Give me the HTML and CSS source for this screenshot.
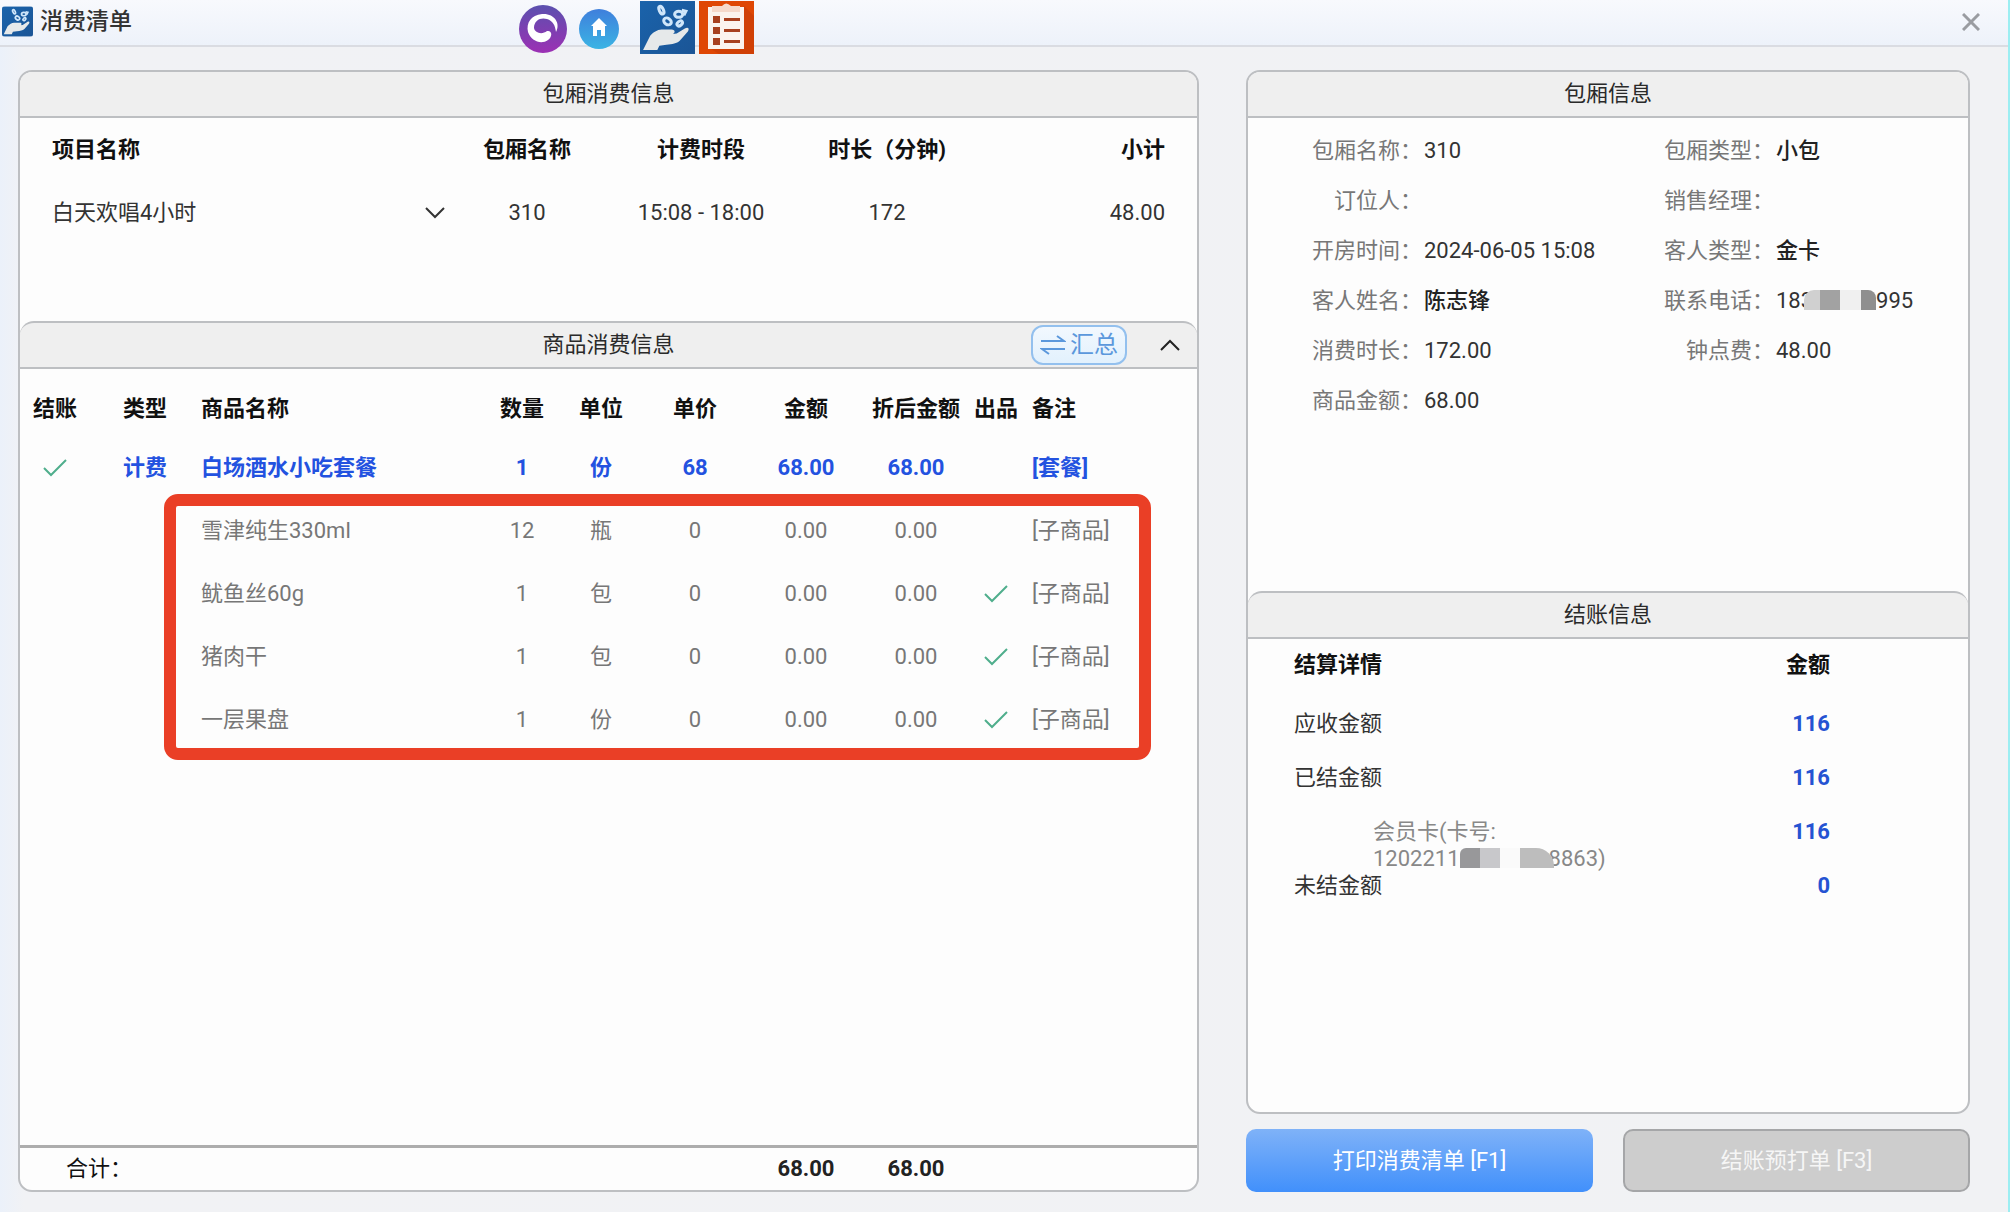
FILE: index.html
```html
<!DOCTYPE html>
<html lang="zh-CN">
<head>
<meta charset="utf-8">
<title>消费清单</title>
<link rel="stylesheet" href="styles.css">
</head>
<body>
<svg class="defs" aria-hidden="true">
  <defs>
    <linearGradient id="tile-blue" x1="0" y1="0" x2="1" y2="1"><stop offset="0" stop-color="#1a63ab"/><stop offset="1" stop-color="#1b5596"/></linearGradient>
    <linearGradient id="purple" x1="0" y1="0" x2="0" y2="1"><stop offset="0" stop-color="#5b50ae"/><stop offset="1" stop-color="#9c30b4"/></linearGradient>
    <linearGradient id="sky" x1="0" y1="0" x2="0" y2="1"><stop offset="0" stop-color="#3f7fdc"/><stop offset="1" stop-color="#3bb4e4"/></linearGradient>
    <symbol id="hand" viewBox="0 0 54 52">
      <rect width="54" height="52" fill="url(#tile-blue)"/>
      <path d="M3 48 10 34C13 31 17 28 21 28H31C35 28 35 32 31 33H26L36 32 44 27C47 25 49 27 47 30L39 39C36 42 32 42 26 43L19 44 17 48Z" fill="#e6e9ea"/>
      <g fill="none" stroke="#cfe6fa" stroke-width="3"><ellipse cx="21" cy="9" rx="2" ry="4" transform="rotate(-25 21 9)"/><ellipse cx="27" cy="20" rx="4" ry="3" transform="rotate(35 27 20)"/><ellipse cx="38" cy="13" rx="4" ry="3"/><ellipse cx="39" cy="22" rx="3" ry="2" transform="rotate(-40 39 22)"/><path d="M41 9l4 1-2 4"/></g>
    </symbol>
    <symbol id="check" viewBox="0 0 24 18"><path d="M1 9 8 16 23 1" fill="none" stroke="#4fae8c" stroke-width="2"/></symbol>
  </defs>
</svg>

<header class="titlebar">
  <svg class="app-icon" aria-hidden="true"><use href="#hand"/></svg>
  <h1>消费清单</h1>
  <nav class="dock" aria-label="快捷入口">
    <a href="#swirl" aria-label="系统"><svg width="52" height="50" viewBox="0 0 52 50"><circle cx="26" cy="26" r="24" fill="url(#purple)"/><path d="M25 11C14 12 9 20 11 29C14 38 24 42 31 37C36 33 35 27 30 28C25 32 18 30 17 25C17 17 24 14 30 16C36 18 38 22 39 29C44 20 37 10 25 11Z" fill="#fff"/></svg></a>
    <a href="#home" aria-label="主页" class="home"><svg width="42" height="42" viewBox="0 0 42 42"><circle cx="21" cy="21" r="20" fill="url(#sky)"/><path d="M21 10 29 18H27V28H23V22H19V28H15V18H13Z" fill="#fff"/></svg></a>
    <a href="#bill" aria-label="消费"><svg width="55" height="53"><use href="#hand"/></svg></a>
    <a href="#list" aria-label="清单"><svg width="55" height="53" viewBox="0 0 55 53"><rect width="55" height="53" fill="#df4705"/><path d="M45 5 55 15V53H20L9 46Z" fill="#d04006"/><rect x="9" y="6" width="36" height="42" fill="#fbf3ee"/><path d="M13 5H23Q27 0 32 5H41V11H13Z" fill="#f5d9cb"/><g fill="#a8401f"><rect x="14" y="15" width="7" height="7"/><rect x="14" y="26" width="7" height="7"/><rect x="14" y="37" width="7" height="7"/><rect x="25" y="17" width="16" height="3"/><rect x="25" y="28" width="16" height="3"/><rect x="25" y="39" width="16" height="3"/></g></svg></a>
  </nav>
  <button class="close" type="button" aria-label="关闭"><svg width="18" height="18" viewBox="0 0 18 18"><path d="M1 1 17 17M17 1 1 17" stroke="#9a9ca1" stroke-width="3"/></svg></button>
</header>

<main class="content">
  <section class="panel">
    <div class="panel-head"><h2>包厢消费信息</h2></div>
    <div class="room-body">
      <table class="room-table">
        <colgroup><col><col class="w-room"><col class="w-period"><col class="w-length"><col class="w-sub"></colgroup>
        <thead><tr><th class="first">项目名称</th><th>包厢名称</th><th>计费时段</th><th>时长（分钟)</th><th class="last">小计</th></tr></thead>
        <tbody><tr>
          <td class="first"><div class="item"><span>白天欢唱4小时</span><button class="icon-btn" type="button" aria-label="展开"><svg width="22" height="14" viewBox="0 0 22 14"><path d="M2 2 11 11 20 2" fill="none" stroke="#333" stroke-width="2"/></svg></button></div></td>
          <td>310</td><td>15:08 - 18:00</td><td>172</td><td class="last">48.00</td>
        </tr></tbody>
      </table>
    </div>

    <div class="panel-head stacked">
      <h2>商品消费信息</h2>
      <div class="head-tools">
        <button class="summary" type="button"><svg width="26" height="20" viewBox="0 0 26 20" aria-hidden="true"><path d="M1 6H24L17 1M25 14H2L9 19" fill="none" stroke="#5b98dc" stroke-width="2"/></svg>汇总</button>
        <button class="icon-btn" type="button" aria-label="收起"><svg width="22" height="14" viewBox="0 0 22 14"><path d="M2 12 11 3 20 12" fill="none" stroke="#222" stroke-width="2"/></svg></button>
      </div>
    </div>
    <div class="goods-body">
      <table class="goods">
        <colgroup><col class="c-paid"><col class="c-type"><col><col class="c-qty"><col class="c-unit"><col class="c-price"><col class="c-sum"><col class="c-net"><col class="c-out"><col class="c-note"></colgroup>
        <thead><tr><th>结账</th><th>类型</th><th class="left">商品名称</th><th>数量</th><th>单位</th><th>单价</th><th>金额</th><th>折后金额</th><th>出品</th><th class="note">备注</th></tr></thead>
        <tbody>
          <tr class="combo"><td><svg class="check"><use href="#check"/></svg></td><td>计费</td><td class="left">白场酒水小吃套餐</td><td>1</td><td>份</td><td>68</td><td>68.00</td><td>68.00</td><td></td><td class="note">[套餐]</td></tr>
          <tr><td></td><td></td><td class="left">雪津纯生330ml</td><td>12</td><td>瓶</td><td>0</td><td>0.00</td><td>0.00</td><td></td><td class="note">[子商品]</td></tr>
          <tr><td></td><td></td><td class="left">鱿鱼丝60g</td><td>1</td><td>包</td><td>0</td><td>0.00</td><td>0.00</td><td><svg class="check"><use href="#check"/></svg></td><td class="note">[子商品]</td></tr>
          <tr><td></td><td></td><td class="left">猪肉干</td><td>1</td><td>包</td><td>0</td><td>0.00</td><td>0.00</td><td><svg class="check"><use href="#check"/></svg></td><td class="note">[子商品]</td></tr>
          <tr><td></td><td></td><td class="left">一层果盘</td><td>1</td><td>份</td><td>0</td><td>0.00</td><td>0.00</td><td><svg class="check"><use href="#check"/></svg></td><td class="note">[子商品]</td></tr>
        </tbody>
      </table>
      <div class="highlight"></div>
    </div>
    <table class="totals">
      <colgroup><col><col class="c-sum"><col class="c-net"><col class="c-out"><col class="c-note"></colgroup>
      <tbody><tr><th scope="row">合计：</th><td>68.00</td><td>68.00</td><td></td><td></td></tr></tbody>
    </table>
  </section>

  <div class="side">
    <section class="panel">
      <div class="panel-head"><h2>包厢信息</h2></div>
      <dl class="info">
        <dt>包厢名称：</dt><dd>310</dd><dt>包厢类型：</dt><dd class="strong">小包</dd>
        <dt>订位人：</dt><dd></dd><dt>销售经理：</dt><dd></dd>
        <dt>开房时间：</dt><dd>2024-06-05 15:08</dd><dt>客人类型：</dt><dd class="strong">金卡</dd>
        <dt>客人姓名：</dt><dd class="strong">陈志锋</dd><dt>联系电话：</dt><dd>183<span class="mask phone"></span>995</dd>
        <dt>消费时长：</dt><dd>172.00</dd><dt>钟点费：</dt><dd>48.00</dd>
        <dt>商品金额：</dt><dd>68.00</dd>
      </dl>
      <div class="panel-head stacked"><h2>结账信息</h2></div>
      <div class="bill-body">
        <table class="bill">
          <thead><tr><th>结算详情</th><th class="amount">金额</th></tr></thead>
          <tbody>
            <tr><td>应收金额</td><td class="amount">116</td></tr>
            <tr><td>已结金额</td><td class="amount">116</td></tr>
            <tr><td class="card">会员卡(卡号:<br>1202211<span class="mask cardno"></span>8863)</td><td class="amount">116</td></tr>
            <tr class="due"><td>未结金额</td><td class="amount">0</td></tr>
          </tbody>
        </table>
      </div>
    </section>
    <div class="actions">
      <button class="primary" type="button">打印消费清单 [F1]</button>
      <button class="muted" type="button" disabled>结账预打单 [F3]</button>
    </div>
  </div>
</main>
</body>
</html>
```

FILE: styles.css
```css
* { box-sizing: border-box; }

body {
  margin: 0;
  min-height: 100vh;
  display: flex;
  flex-direction: column;
  background: linear-gradient(90deg, #ebf1fa 0, #f1f2f5 24px, #f1f2f4 100%);
  border-right: 2px solid #9ceef2;
  font: 22px/28px Roboto, "Noto Sans CJK SC", sans-serif;
  color: #333;
}

h1, h2, dl, dd { margin: 0; font-weight: 400; }
button { font: inherit; border: 0; padding: 0; background: none; color: inherit; }
svg { display: block; }
table { width: 100%; table-layout: fixed; border-collapse: collapse; }
th, td { padding: 0; text-align: center; }
th { font-weight: 700; color: #111; }

.defs { position: absolute; width: 0; height: 0; }

/* Title bar */
.titlebar {
  position: relative;
  display: flex;
  align-items: center;
  gap: 7px;
  height: 47px;
  padding: 0 18px 2px 2px;
  border-bottom: 2px solid #dadce2;
  background: linear-gradient(#f8f9fd, #edf2fa);
}
.app-icon { width: 31px; height: 31px; border-radius: 3px; }
h1 { flex: 1; font-size: 23px; font-weight: 500; color: #333; }
.dock {
  position: absolute;
  left: 517px;
  top: 1px;
  display: flex;
  align-items: center;
  gap: 4px;
}
.home { margin: 3px 16px 0 5px; }
.close { padding: 10px; }

/* Panels */
.content {
  flex: 1;
  display: grid;
  grid-template-columns: minmax(0, 1181fr) minmax(0, 724fr);
  gap: 47px;
  padding: 23px 38px 20px 18px;
}
.panel {
  flex: 1;
  display: flex;
  flex-direction: column;
  border: 2px solid #bdbfc2;
  border-radius: 14px;
  background: #fdfdfd;
  overflow: hidden;
}
.panel-head {
  display: grid;
  grid-template-columns: 1fr auto 1fr;
  align-items: center;
  height: 46px;
  border-bottom: 2px solid #bdbfc2;
  background: #efefef;
}
.panel-head h2 { grid-column: 2; font-size: 22px; color: #2a2a2a; }
.stacked {
  height: 48px;
  border-top: 2px solid #bdbfc2;
  border-radius: 14px 14px 0 0;
}
.head-tools {
  display: flex;
  justify-content: flex-end;
  align-items: center;
  gap: 32px;
  padding-right: 16px;
}
.summary {
  display: flex;
  align-items: center;
  gap: 4px;
  height: 40px;
  padding: 0 7px;
  border: 2px solid #93c0ee;
  border-radius: 12px;
  background: linear-gradient(#f2f8fe, #e2f1fd);
  color: #5b98dc;
  font-size: 24px;
}

/* Room charges */
.room-body { height: 203px; }
.room-table tr { height: 63px; }
.w-room { width: 152px; }
.w-period { width: 196px; }
.w-length { width: 176px; }
.w-sub { width: 222px; }
.room-table .first { padding-left: 32px; text-align: left; }
.room-table .last { padding-right: 32px; text-align: right; }
.item { display: flex; justify-content: space-between; align-items: center; padding-right: 5px; }

/* Goods */
.goods-body { position: relative; flex: 1; }
.goods tr { height: 63px; }
.goods thead tr { height: 67px; }
.goods thead th { padding-top: 12px; }
.c-paid { width: 70px; }
.c-type { width: 110px; }
.c-qty { width: 86px; }
.c-unit { width: 72px; }
.c-price { width: 116px; }
.c-sum { width: 106px; }
.c-net { width: 114px; }
.c-out { width: 46px; }
.c-note { width: 178px; }
.goods td { color: #777; }
.goods .combo td { color: #2352e0; font-weight: 700; }
.goods .left { padding-left: 1px; text-align: left; }
.goods .note { padding-left: 13px; text-align: left; }
.check { width: 24px; height: 18px; margin: 0 auto; }
.highlight {
  position: absolute;
  top: 125px;
  left: 144px;
  right: 46px;
  height: 266px;
  border: 12px solid #ea3f26;
  border-radius: 14px;
}
.totals { border-top: 3px solid #adadad; }
.totals tr { height: 44px; }
.totals th { padding-left: 46px; text-align: left; font-weight: 400; }
.totals td { font-weight: 700; color: #222; }

/* Room details */
.side { display: flex; flex-direction: column; gap: 15px; }
.info {
  display: grid;
  grid-template-columns: 110px 238px 110px 1fr;
  grid-auto-rows: 50px;
  column-gap: 2px;
  align-content: start;
  align-items: center;
  height: 473px;
  padding: 8px 0 0 64px;
}
.info dt { text-align: right; color: #777; }
.info dd { white-space: nowrap; }
.info .strong { font-weight: 500; color: #222; }
.mask { display: inline-block; height: 20px; vertical-align: -2px; }
.phone {
  width: 72px;
  margin-left: -9px;
  border-radius: 10px 8px 0 0;
  background: linear-gradient(90deg, #d0d0d0 16px, #a2a2a2 16px 36px, #f0f0f0 36px 57px, #8f8f8f 57px);
}
.cardno {
  position: relative;
  width: 94px;
  margin-right: -5px;
  border-radius: 6px 18px 0 0;
  background: linear-gradient(90deg, #98989a 20px, #c8c8cb 20px 40px, #fafafa 40px 60px, #bdbdbd 60px);
}

/* Settlement */
.bill-body { flex: 1; padding: 12px 138px 0 46px; }
.bill { line-height: 27px; }
.bill th { height: 32px; text-align: left; vertical-align: top; }
.bill td { padding-top: 27px; text-align: left; vertical-align: top; }
.bill .card { padding-left: 79px; color: #888; }
.bill .due td { padding-top: 0; }
.bill .amount { width: 120px; text-align: right; }
.bill td.amount { font-weight: 700; color: #2553d2; }

.actions { display: grid; grid-template-columns: 1fr 1fr; gap: 30px; }
.actions button { height: 63px; border-radius: 10px; }
.primary {
  color: #fff;
  background: linear-gradient(#7fb2f8, #4190fb);
}
.muted { border: 2px solid #a5a6a8; color: #f6f6f6; background: #cdcdcd; }
```
